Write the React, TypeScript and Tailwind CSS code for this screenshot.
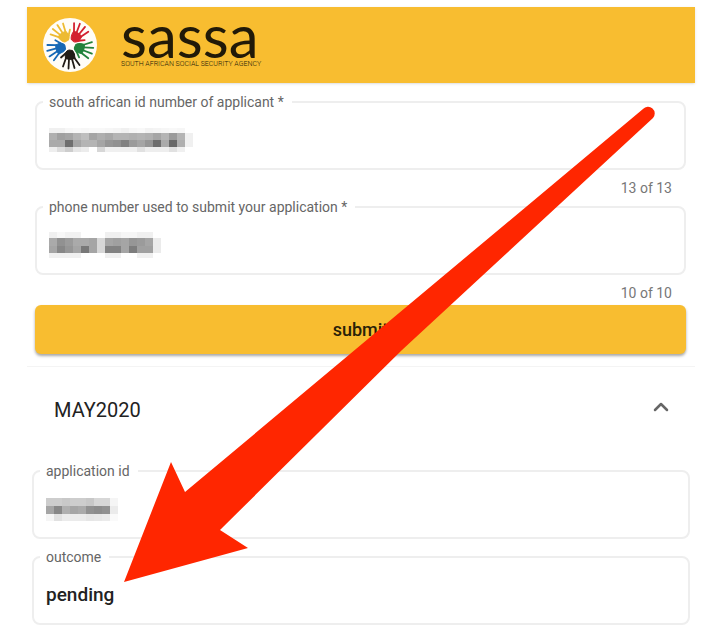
import { ChevronUp } from 'lucide-react'

interface Mosaic {
  cell: number
  rows: { height: number; shades: number[] }[]
}

interface FieldProps {
  id: string
  label: string
  value?: string
  mosaic?: Mosaic
}

// Each shade is a grey level, 255 leaves the cell white
const ID_MOSAIC: Mosaic = {
  cell: 8,
  rows: [
    { height: 5, shades: [240, 240, 246, 248, 246, 248, 248, 246, 244, 240, 246, 248, 242, 244, 246, 248, 246, 255] },
    { height: 7, shades: [175, 160, 165, 180, 190, 165, 175, 168, 180, 180, 176, 180, 176, 165, 180, 155, 180, 240] },
    { height: 7, shades: [170, 170, 110, 165, 180, 180, 165, 150, 145, 130, 155, 165, 150, 110, 170, 105, 175, 240] },
    { height: 5, shades: [238, 220, 205, 230, 236, 255, 215, 240, 240, 240, 240, 225, 238, 238, 238, 225, 240, 255] },
  ],
}

const PHONE_MOSAIC: Mosaic = {
  cell: 8,
  rows: [
    { height: 6, shades: [240, 248, 242, 242, 255, 255, 255, 240, 240, 246, 246, 240, 240, 255] },
    { height: 8, shades: [170, 145, 155, 170, 170, 165, 215, 165, 160, 165, 150, 155, 165, 235] },
    { height: 7, shades: [165, 135, 150, 165, 120, 165, 215, 130, 130, 165, 125, 160, 160, 235] },
    { height: 5, shades: [240, 240, 240, 240, 255, 255, 255, 240, 240, 255, 255, 240, 240, 255] },
  ],
}

const APPLICATION_MOSAIC: Mosaic = {
  cell: 8,
  rows: [
    { height: 8, shades: [205, 205, 200, 205, 205, 200, 215, 215, 245] },
    { height: 8, shades: [165, 135, 175, 165, 170, 145, 140, 145, 235] },
    { height: 7, shades: [245, 225, 235, 235, 235, 230, 232, 235, 250] },
  ],
}

const HANDS = [
  { color: '#edbb32', angle: -36 },
  { color: '#d3202e', angle: 36 },
  { color: '#23823c', angle: 108 },
  { color: '#211c16', angle: 180 },
  { color: '#1769b5', angle: 252 },
]

function Logo() {
  return (
    <svg className="size-[54px] shrink-0" viewBox="0 0 54 54" aria-hidden="true">
      <circle cx="27" cy="27" r="27" fill="#fffdf8" />
      {HANDS.map((hand) => (
        <g key={hand.color} transform={`rotate(${hand.angle} 27 27)`} fill={hand.color} stroke={hand.color}>
          <path
            d="M22 13.5 Q27 11.5 31.5 13.5 L32 18.5 Q30 22 28 22 L24.5 21.5 Q22 19 22 13.5 Z"
            strokeWidth="1"
            strokeLinejoin="round"
          />
          <path
            d="M22.5 14 L17.5 7 M25 13 L22.5 4 M28 13 L28.5 3.5 M31 14 L34 5.5 M31.5 18.5 L36 14.5"
            strokeWidth="1.8"
            strokeLinecap="round"
          />
        </g>
      ))}
    </svg>
  )
}

function Redacted({ mosaic }: { mosaic: Mosaic }) {
  const width = mosaic.rows[0].shades.length * mosaic.cell
  const height = mosaic.rows.reduce((sum, row) => sum + row.height, 0)
  let y = 0

  return (
    <svg className="shrink-0" width={width} height={height} shapeRendering="crispEdges" aria-hidden="true">
      {mosaic.rows.map((row, r) => {
        const top = y
        y += row.height
        return row.shades.map((shade, c) => (
          <rect
            key={`${r}-${c}`}
            x={c * mosaic.cell}
            y={top}
            width={mosaic.cell}
            height={row.height}
            fill={`rgb(${shade},${shade},${shade})`}
          />
        ))
      })}
    </svg>
  )
}

function Field({ id, label, value, mosaic }: FieldProps) {
  return (
    <fieldset className="min-w-0 rounded-lg border-2 border-[#eeeeee] px-1.5">
      <legend className="pr-2 pl-1.5 text-sm leading-4 text-[#666666]">
        <label htmlFor={id}>{label}</label>
      </legend>
      <div className="flex h-[58px] items-center px-1.5 pt-0.5">
        {mosaic && <Redacted mosaic={mosaic} />}
        <input
          id={id}
          type="text"
          defaultValue={value}
          className="min-w-0 flex-1 bg-transparent text-[19px] font-medium text-[#222222] outline-none"
        />
      </div>
    </fieldset>
  )
}

function Counter({ text }: { text: string }) {
  return <p className="px-3.5 pt-2 pb-px text-right text-sm leading-5 text-[#777777]">{text}</p>
}

function Arrow() {
  return (
    <svg
      className="pointer-events-none absolute top-0 left-0"
      width="720"
      height="626"
      viewBox="0 0 720 626"
      aria-hidden="true"
    >
      <path
        d="M124 582 L171 462 L185 492 L643 109 A6.5 6.5 0 0 1 653 118 L402 350 L220 530 L248 548 Z"
        fill="#ff2600"
      />
    </svg>
  )
}

export default function App() {
  return (
    <div className="relative bg-white pt-[7px] pr-[25px] pl-[27px] font-[Roboto,sans-serif]">
      <header className="flex h-[76px] items-center gap-6 bg-[#f8bd30] px-4 shadow-sm">
        <Logo />
        <div className="pb-2 text-[#211a08]">
          <h1 className="font-[Lato,sans-serif] text-[60px] leading-[46px]">sassa</h1>
          <p className="text-[7px] leading-3 font-light">SOUTH AFRICAN SOCIAL SECURITY AGENCY</p>
        </div>
      </header>

      <main>
        <form className="pt-[11px] pr-[9px] pb-3 pl-2" onSubmit={(e) => e.preventDefault()}>
          <Field id="id-number" label="south african id number of applicant *" mosaic={ID_MOSAIC} />
          <Counter text="13 of 13" />
          <Field id="phone-number" label="phone number used to submit your application *" mosaic={PHONE_MOSAIC} />
          <Counter text="10 of 10" />
          <button
            type="submit"
            className="mt-px h-[49px] w-full rounded-md bg-[#f8bd30] text-lg font-medium text-[#2a2108] shadow-[0_2px_3px_rgba(0,0,0,0.35)]"
          >
            submit
          </button>
        </form>

        <section className="border-t border-[#f4f4f4]">
          <button
            type="button"
            aria-expanded="true"
            className="flex h-[86px] w-full items-center justify-between pr-[22px] pl-[27px] text-xl text-[#222222]"
          >
            MAY2020
            <ChevronUp className="mb-1.5 size-6 text-[#666666]" strokeWidth={2.5} aria-hidden="true" />
          </button>
          <div className="flex flex-col gap-2.5 px-[5px] pt-2.5">
            <Field id="application-id" label="application id" mosaic={APPLICATION_MOSAIC} />
            <Field id="outcome" label="outcome" value="pending" />
          </div>
        </section>
      </main>

      <Arrow />
    </div>
  )
}
